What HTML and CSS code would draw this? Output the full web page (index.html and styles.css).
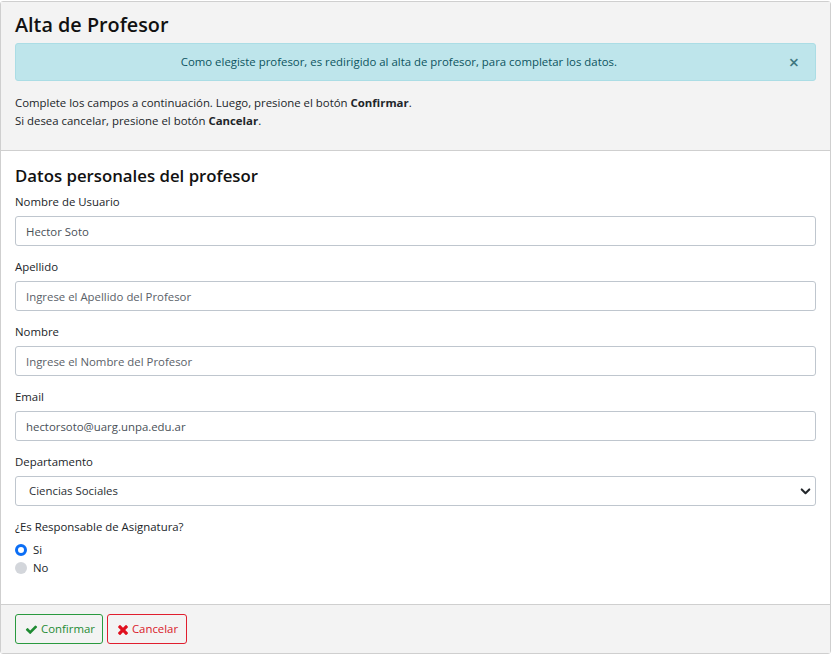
FILE: index.html
```html
<!DOCTYPE html>
<html lang="es">
<head>
<meta charset="utf-8">
<title>Alta de Profesor</title>
<link rel="stylesheet" href="styles.css">
</head>
<body>
<div class="card">
  <div class="card-header">
    <h1 class="title">Alta de Profesor</h1>
    <div class="alert">
      <span class="alert-text">Como elegiste profesor, es redirigido al alta de profesor, para completar los datos.</span>
      <span class="close">&times;</span>
    </div>
    <p class="intro">Complete los campos a continuación. Luego, presione el botón <b>Confirmar</b>.<br>Si desea cancelar, presione el botón <b>Cancelar</b>.</p>
  </div>
  <div class="card-body">
    <h2 class="subtitle">Datos personales del profesor</h2>
    <div class="group">
      <label class="label">Nombre de Usuario</label>
      <input class="input" type="text" value="Hector Soto">
    </div>
    <div class="group">
      <label class="label">Apellido</label>
      <input class="input" type="text" placeholder="Ingrese el Apellido del Profesor">
    </div>
    <div class="group">
      <label class="label">Nombre</label>
      <input class="input" type="text" placeholder="Ingrese el Nombre del Profesor">
    </div>
    <div class="group">
      <label class="label">Email</label>
      <input class="input" type="email" value="hectorsoto@uarg.unpa.edu.ar">
    </div>
    <div class="group">
      <label class="label">Departamento</label>
      <div class="select">
        <span>Ciencias Sociales</span>
        <svg class="chev" viewBox="0 0 16 16" width="11" height="11"><path d="M2.5 5 8 10.5 13.5 5" fill="none" stroke="#23272b" stroke-width="3" stroke-linecap="round" stroke-linejoin="round"/></svg>
      </div>
    </div>
    <div class="group">
      <label class="label">¿Es Responsable de Asignatura?</label>
      <div class="radios">
        <label class="radio"><span class="dot on"></span>Si</label>
        <label class="radio"><span class="dot"></span>No</label>
      </div>
    </div>
  </div>
  <div class="card-footer">
    <button class="btn btn-ok"><svg class="ico" viewBox="0 0 1792 1792" width="13" height="13"><path fill="#1f8b33" d="M1671 566q0 40-28 68l-724 724-136 136q-28 28-68 28t-68-28l-136-136-362-362q-28-28-28-68t28-68l136-136q28-28 68-28t68 28l294 295 656-657q28-28 68-28t68 28l136 136q28 28 28 68z"/></svg>Confirmar</button>
    <button class="btn btn-cancel"><svg class="ico" viewBox="0 0 1408 1792" width="12" height="15"><path fill="#e0101e" d="M1298 1322q0 40-28 68l-136 136q-28 28-68 28t-68-28l-294-294-294 294q-28 28-68 28t-68-28l-136-136q-28-28-28-68t28-68l294-294-294-294q-28-28-28-68t28-68l136-136q28-28 68-28t68 28l294 294 294-294q28-28 68-28t68 28l136 136q28 28 28 68t-28 68l-294 294 294 294q28 28 28 68z"/></svg>Cancelar</button>
  </div>
</div>
</body>
</html>
```

FILE: styles.css
```css
* { box-sizing: border-box; }
html, body { background: #fff; }
body {
  margin: 1px 0 0 0;
  font-family: "Segoe UI", "Open Sans", sans-serif;
  font-size: 11.4px;
  line-height: 18px;
  color: #212529;
}
.card {
  width: 831px;
  border: 1px solid #cfcfcf;
  border-radius: 3px;
  background: #fff;
}
.card-header {
  background: #f3f3f3;
  border-bottom: 1px solid #cfcfcf;
  padding: 10px 14px 10px;
}
.title {
  margin: 0 0 6px;
  font-size: 19.8px;
  line-height: 25px;
  font-weight: 600;
  color: #111;
}
.alert {
  display: flex;
  align-items: center;
  background: #bee5eb;
  border: 1px solid #abdde5;
  border-radius: 3px;
  color: #0c5460;
  padding: 9px 16px 9px 12px;
}
.alert-text { flex: 1; text-align: center; }
.close {
  margin-left: 19px;
  font-size: 18px;
  line-height: 18px;
  color: #3f7880;
  font-weight: 600;
}
.intro { margin: 13px 0 10px; }
.intro b { font-weight: 700; }
.card-body { padding: 14px 14px 15px; }
.subtitle {
  margin: 0 0 6px;
  font-size: 16.8px;
  line-height: 22px;
  font-weight: 600;
  color: #111;
}
.group { margin-bottom: 12px; }
.label { display: block; margin-bottom: 5px; }
.input, .select {
  display: block;
  width: 100%;
  height: 30px;
  border: 1px solid #bfc6ce;
  border-radius: 3px;
  padding: 0 10px;
  font: inherit;
  color: #495057;
  background: #fff;
}
.input::placeholder { color: #5a6168; opacity: 1; }
.select {
  display: flex;
  align-items: center;
  justify-content: space-between;
  padding: 0 4px 0 13px;
  color: #2a2f34;
}
.radios { display: flex; flex-direction: column; }
.radio { display: flex; align-items: center; gap: 6px; line-height: 18px; }
.dot {
  width: 12px; height: 12px; border-radius: 50%;
  background: #d3d6db;
}
.dot.on { background: #fff; border: 3.5px solid #0b6ef5; }
.card-footer {
  background: #f3f3f3;
  border-top: 1px solid #cfcfcf;
  padding: 9px 14px;
  display: flex;
  gap: 4px;
}
.btn {
  height: 30px;
  display: inline-flex;
  align-items: center;
  gap: 3px;
  background: transparent;
  border-radius: 3px;
  font: inherit;
  padding: 0 8px 0 9px;
}
.btn-ok { border: 1px solid #2a9a3f; color: #1f8b33; padding-right: 7px; }
.btn-cancel { border: 1px solid #e01e2e; color: #d9182a; }
```
